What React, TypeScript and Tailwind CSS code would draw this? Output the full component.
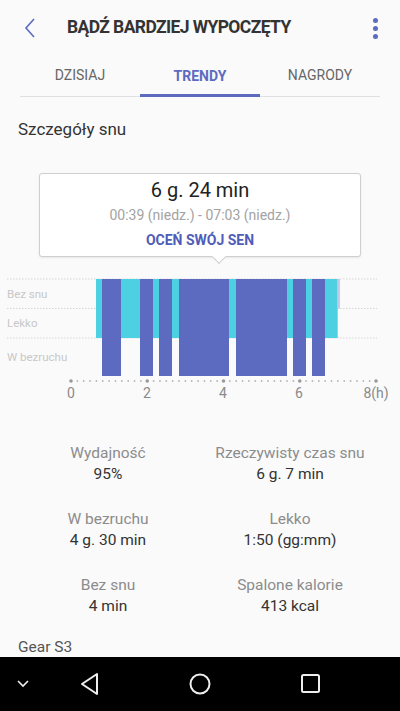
import React from "react";

const awake = [[337.7, 340]];
const light = [[96, 337.7]];
const deep = [
	[102, 121],
	[140, 153],
	[159, 172],
	[179, 229],
	[236, 287],
	[293, 306],
	[312, 325],
];

function SleepChart() {
	const axisDots = [];
	for (let i = 0; i <= 48; i++) {
		const x = 71 + i * (305 / 48);
		const big = i % 12 === 0;
		axisDots.push(<circle key={i} cx={x} cy={113} r={big ? 1.8 : 0.9} fill={big ? "#9a9a9a" : "#b5b5b5"} />);
	}
	return (
		<svg width="400" height="136" viewBox="0 0 400 136" className="block">
			{/* linie pomocnicze */}
			{[11, 40.5, 70].map((y) => (
				<line key={y} x1="7" x2="377" y1={y} y2={y} stroke="#d6d6d6" strokeWidth="1" strokeDasharray="1.5 1.5" />
			))}
			{light.map(([a, b]) => (
				<rect key={a} x={a} y={11} width={b - a} height={59} fill="#4dd0e1" />
			))}
			{awake.map(([a, b]) => (
				<rect key={a} x={a} y={11} width={b - a} height={29.5} fill="#c5cae9" />
			))}
			{deep.map(([a, b]) => (
				<rect key={a} x={a} y={11} width={b - a} height={97} fill="#5c6bc0" />
			))}
			<text x="7" y="30" fontSize="11.5" fill="#c8c8c8" fontFamily="Roboto, sans-serif">Bez snu</text>
			<text x="7" y="59" fontSize="11.5" fill="#c8c8c8" fontFamily="Roboto, sans-serif">Lekko</text>
			<text x="7" y="93" fontSize="11.5" fill="#c8c8c8" fontFamily="Roboto, sans-serif">W bezruchu</text>
			{axisDots}
			{[
				[71, "0"],
				[147, "2"],
				[223, "4"],
				[299, "6"],
				[376, "8(h)"],
			].map(([x, t]) => (
				<text key={t as string} x={x as number} y="130" fontSize="14" fill="#8a8a8a" textAnchor="middle" fontFamily="Roboto, sans-serif">
					{t}
				</text>
			))}
		</svg>
	);
}

function Stat({ label, value }: { label: string; value: string }) {
	return (
		<div className="flex flex-col items-center whitespace-nowrap">
			<span className="text-[15.5px] leading-[21px] text-[#8c8c8c]">{label}</span>
			<span className="text-[15.5px] leading-[21px] text-[#333]">{value}</span>
		</div>
	);
}

export default function App() {
	return (
		<div className="w-[400px] h-[711px] bg-[#fafafa] flex flex-col overflow-hidden font-['Roboto',sans-serif]">
			{/* Nagłówek */}
			<div className="h-[55px] flex items-center relative shrink-0">
				<svg width="12" height="20" viewBox="0 0 12 20" className="ml-[24px]">
					<path d="M10 1 L2 10 L10 19" fill="none" stroke="#5c6bc0" strokeWidth="1.6" />
				</svg>
				<h1 className="ml-[31px] text-[17.5px] font-bold text-[#333] tracking-[-0.6px]">BĄDŹ BARDZIEJ WYPOCZĘTY</h1>
				<div className="absolute right-[22px] top-[18px] flex flex-col gap-[3px]">
					<span className="w-[5px] h-[5px] rounded-full bg-[#5c6bc0]" />
					<span className="w-[5px] h-[5px] rounded-full bg-[#5c6bc0]" />
					<span className="w-[5px] h-[5px] rounded-full bg-[#5c6bc0]" />
				</div>
			</div>
			{/* Zakładki */}
			<div className="mx-5 h-[42px] grid grid-cols-3 border-b border-[#e0e0e0] shrink-0">
				<div className="flex items-center justify-center text-[14px] text-[#666]">DZISIAJ</div>
				<div className="flex items-center justify-center text-[14px] font-bold text-[#5c6bc0] border-b-[3px] border-[#5c6bc0] pt-[3px] -mb-[1px]">TRENDY</div>
				<div className="flex items-center justify-center text-[14px] text-[#666]">NAGRODY</div>
			</div>
			<div className="px-[18px] pt-[21px] text-[17px] leading-[22px] text-[#333]">Szczegóły snu</div>
			{/* Dymek */}
			<div className="mt-[33px] mx-[39px] h-[85px] relative bg-white border border-[#cfcfcf] rounded-[3px] shadow-[0_1px_2px_rgba(0,0,0,0.08)] flex flex-col items-center pt-[3px]">
				<span className="text-[20px] leading-[26px] text-[#222]">6 g. 24 min</span>
				<span className="text-[14px] leading-[24px] text-[#a3a3a3]">00:39 (niedz.) - 07:03 (niedz.)</span>
				<span className="text-[14px] leading-[26px] font-bold text-[#4f5db8]">OCEŃ SWÓJ SEN</span>
				<div className="absolute left-[174px] -bottom-[6px] w-[10px] h-[10px] bg-white border-r border-b border-[#cfcfcf] rotate-45" />
			</div>
			<div className="mt-[11px] shrink-0">
				<SleepChart />
			</div>
			{/* Statystyki */}
			<div className="grid grid-cols-[216px_148px] gap-y-[24px] mt-[39px] shrink-0">
				<Stat label="Wydajność" value="95%" />
				<Stat label="Rzeczywisty czas snu" value="6 g. 7 min" />
				<Stat label="W bezruchu" value="4 g. 30 min" />
				<Stat label="Lekko" value="1:50 (gg:mm)" />
				<Stat label="Bez snu" value="4 min" />
				<Stat label="Spalone kalorie" value="413 kcal" />
			</div>
			<div className="px-[18px] mt-[20px] text-[15.5px] leading-[20px] text-[#555] shrink-0">Gear S3</div>
			<div className="flex-1" />
			{/* Pasek nawigacji */}
			<div className="h-[54px] bg-black shrink-0 relative flex items-center">
				<svg width="14" height="10" viewBox="0 0 14 10" className="absolute left-[16px] top-[22px]">
					<path d="M2 2 L7 7 L12 2" fill="none" stroke="#eee" strokeWidth="1.6" />
				</svg>
				<svg width="22" height="24" viewBox="0 0 22 24" className="absolute left-[79px] top-[15px]">
					<path d="M18 2 L3 12 L18 22 Z" fill="none" stroke="#eee" strokeWidth="2" strokeLinejoin="round" />
				</svg>
				<svg width="24" height="24" viewBox="0 0 24 24" className="absolute left-[188px] top-[15px]">
					<circle cx="12" cy="12" r="9.5" fill="none" stroke="#eee" strokeWidth="2" />
				</svg>
				<svg width="22" height="22" viewBox="0 0 22 22" className="absolute left-[300px] top-[16px]">
					<rect x="2" y="2" width="17" height="17" rx="1.5" fill="none" stroke="#eee" strokeWidth="2" />
				</svg>
			</div>
		</div>
	);
}
